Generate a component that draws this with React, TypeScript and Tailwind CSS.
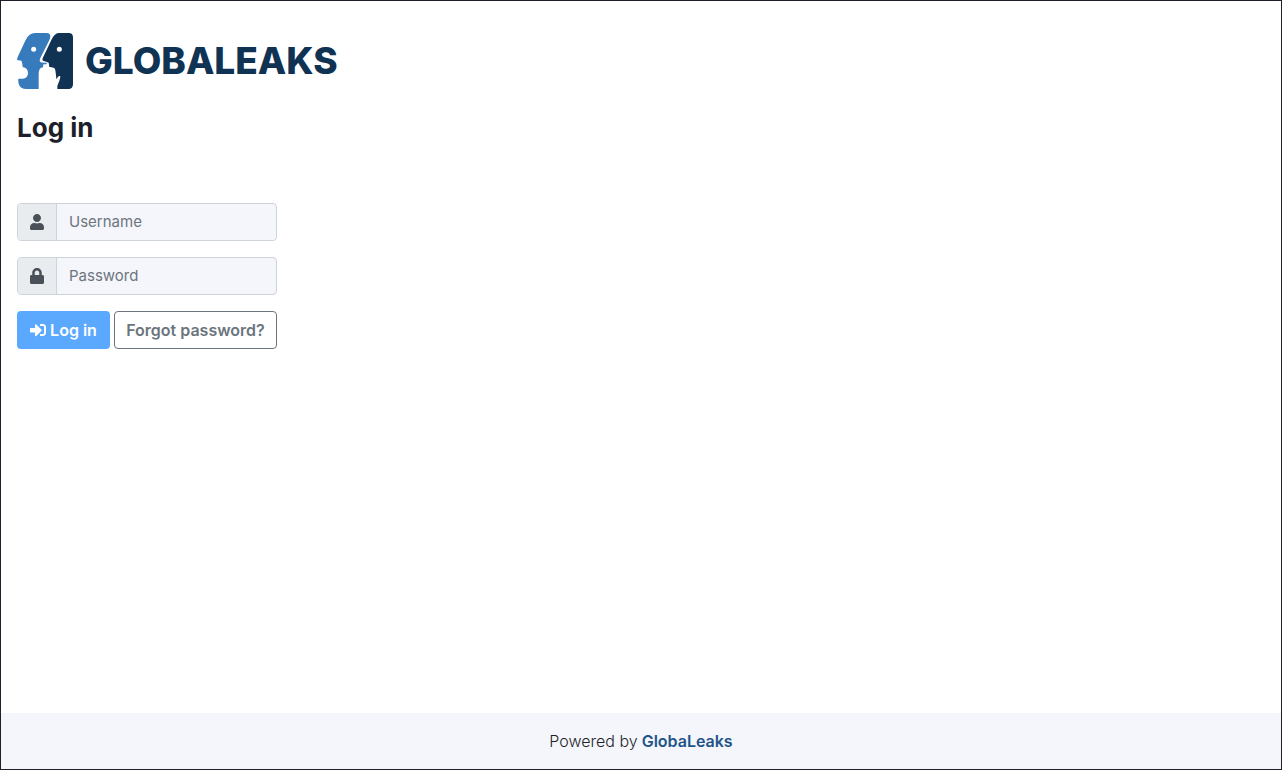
import { useState } from "react";
import type { ReactNode } from "react";
import { FaLock, FaSignInAlt, FaUser } from "react-icons/fa";

function LogoMark() {
  return (
    <svg viewBox="21 21 168 168" className="size-14 shrink-0" aria-hidden="true">
      <path
        fill="#377bbc"
        d="M75 21H110Q121 21 121 32Q121 37 117 44L90 98Q87 105 92 109Q98 111 110 110V115H101Q99 118 99 124L92 126Q86 131 86 145V189H50Q30 189 26 173Q24 165 25 158H38Q54 157 54 141Q54 126 38 123Q38 110 34 104L21 102Q21 98 24 91L47 42Q57 21 75 21Z"
      />
      <path
        fill="#103253"
        d="M146 21H176Q189 21 189 34V175Q189 189 175 189H142Q141 179 145 172Q148 166 151 154Q152 149 147 150Q142 154 139 160Q138 145 136 133Q135 124 130 125Q125 123 120 123H118L116 110Q110 107 99 104Q96 102 98 97L124 42Q133 22 146 21Z"
      />
      <circle cx="71" cy="70" r="7.5" fill="#fff" />
      <circle cx="148" cy="70" r="7.5" fill="#fff" />
    </svg>
  );
}

type FieldProps = {
  id: string;
  label: string;
  type: string;
  icon: ReactNode;
  value: string;
  onChange: (value: string) => void;
};

function Field({ id, label, type, icon, value, onChange }: FieldProps) {
  return (
    <div className="flex h-[38px] overflow-hidden rounded border border-[#ced4da] bg-[#f5f6fb]">
      <label
        htmlFor={id}
        aria-label={label}
        className="flex items-center border-r border-[#ced4da] bg-[#e9ecef] px-3 text-[#495057]"
      >
        {icon}
      </label>
      <input
        id={id}
        type={type}
        placeholder={label}
        value={value}
        onChange={(event) => onChange(event.target.value)}
        className="min-w-0 flex-1 bg-transparent px-3 text-[15px] text-[#495057] outline-none placeholder:text-[#6c757d]"
      />
    </div>
  );
}

export default function App() {
  const [username, setUsername] = useState("");
  const [password, setPassword] = useState("");

  return (
    <div className="flex min-h-screen flex-col border border-[#1d1f2a] bg-white font-['Inter','Liberation_Sans',sans-serif] text-base leading-6 text-[#1d1f2a]">
      <header className="px-4 pt-8">
        <a href="#" className="flex w-fit items-center gap-3 text-[#103253]">
          <LogoMark />
          <span className="text-[37px] leading-[56px] font-extrabold">GLOBALEAKS</span>
        </a>
        <h1 className="mt-6 text-[26px] leading-[30px] font-bold">Log in</h1>
      </header>

      <main className="flex-1 px-4 pt-[60px]">
        <form
          className="flex w-[260px] flex-col gap-4"
          onSubmit={(event) => event.preventDefault()}
        >
          <Field
            id="username"
            label="Username"
            type="text"
            icon={<FaUser className="h-4 w-[14px]" />}
            value={username}
            onChange={setUsername}
          />
          <Field
            id="password"
            label="Password"
            type="password"
            icon={<FaLock className="h-4 w-[14px]" />}
            value={password}
            onChange={setPassword}
          />
          <div className="flex gap-1 whitespace-nowrap">
            <button
              type="submit"
              className="flex h-[38px] w-[93px] items-center justify-center gap-1 rounded bg-[#5aa9ff] font-semibold text-white"
            >
              <FaSignInAlt className="size-4" />
              Log in
            </button>
            <button
              type="button"
              className="h-[38px] flex-1 rounded border border-[#6c757d] font-semibold text-[#6c757d]"
            >
              Forgot password?
            </button>
          </div>
        </form>
      </main>

      <footer className="flex items-center justify-center gap-1 bg-[#f5f6fb] p-4">
        <span className="font-light">Powered by</span>
        <a href="#" className="font-semibold text-[#1f5489]">
          GlobaLeaks
        </a>
      </footer>
    </div>
  );
}
